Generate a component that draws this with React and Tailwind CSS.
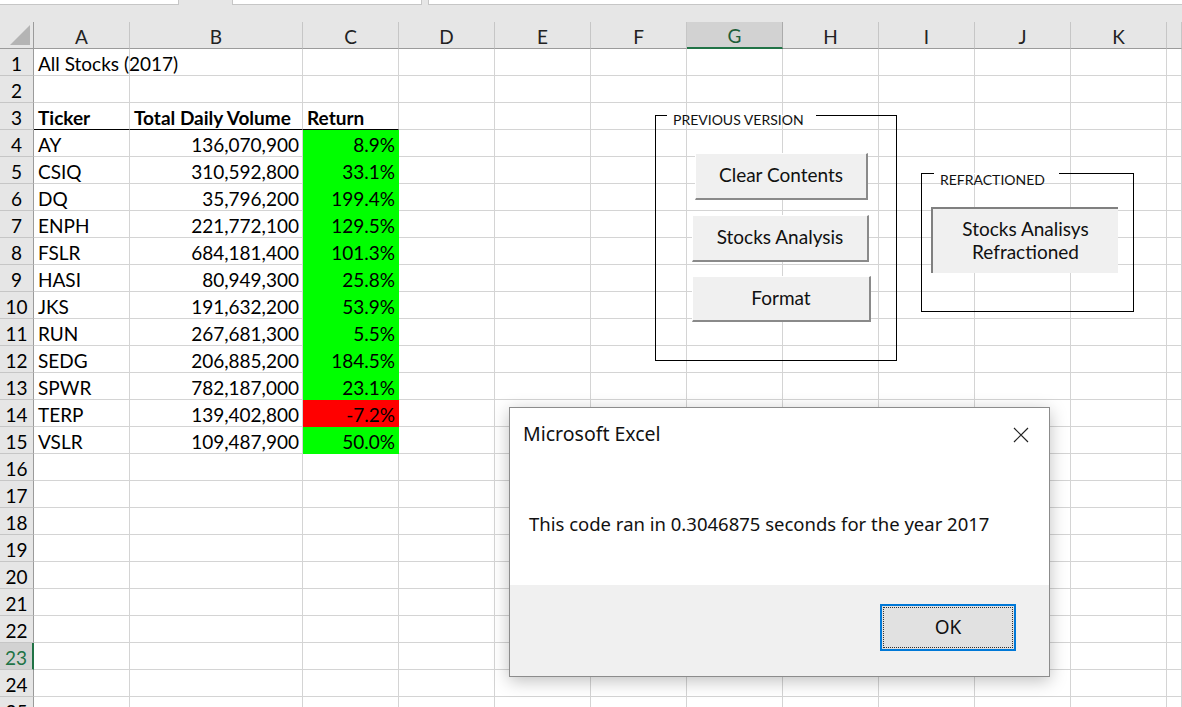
import React from "react";

const COLS = ["A", "B", "C", "D", "E", "F", "G", "H", "I", "J", "K", ""];
const data = {
  1: { A: "All Stocks (2017)" },
  3: { A: "Ticker", B: "Total Daily Volume", C: "Return", bold: true },
  4: ["AY", "136,070,900", "8.9%"],
  5: ["CSIQ", "310,592,800", "33.1%"],
  6: ["DQ", "35,796,200", "199.4%"],
  7: ["ENPH", "221,772,100", "129.5%"],
  8: ["FSLR", "684,181,400", "101.3%"],
  9: ["HASI", "80,949,300", "25.8%"],
  10: ["JKS", "191,632,200", "53.9%"],
  11: ["RUN", "267,681,300", "5.5%"],
  12: ["SEDG", "206,885,200", "184.5%"],
  13: ["SPWR", "782,187,000", "23.1%"],
  14: ["TERP", "139,402,800", "-7.2%"],
  15: ["VSLR", "109,487,900", "50.0%"],
};

const gridCols =
  "grid grid-cols-[34px_96px_173px_96px_96px_96px_96px_96px_96px_96px_96px_96px_15px]";

function Row({ n }) {
  const d = data[n];
  const isData = Array.isArray(d);
  const sel = n === 23;
  return (
    <div className={`${gridCols} h-[27px]`}>
      <div
        className={`flex items-center justify-center border-b border-b-[#c6c6c6] border-r ${
          sel
            ? "bg-[#d2d2d2] text-[#217346] border-r-2 border-r-[#217346]"
            : "bg-[#e6e6e6] text-black border-r-[#9b9b9b]"
        } text-[19px] leading-none pt-[3px]`}
      >
        {n}
      </div>
      {COLS.map((c, i) => {
        let text = "";
        let cls = "border-r border-b border-[#d4d4d4] bg-white";
        let align = "justify-start pl-[4px]";
        if (isData) {
          if (c === "A") text = d[0];
          if (c === "B") {
            text = d[1];
            align = "justify-end pr-[3px]";
          }
          if (c === "C") {
            text = d[2];
            align = "justify-end pr-[3px]";
            cls =
              n === 14
                ? "border-r border-b border-[#ff0000] bg-[#ff0000]"
                : "border-r border-b border-[#00ff00] bg-[#00ff00]";
          }
        } else if (d) {
          text = d[c] || "";
          if (d.bold && ["A", "B", "C"].includes(c)) {
            cls = "border-r border-b border-[#d4d4d4] border-b-black bg-white";
          }
        }
        return (
          <div
            key={i}
            className={`${cls} flex items-center ${align} overflow-visible whitespace-nowrap text-[19px] leading-none pt-[3px] ${
              d && d.bold ? "font-bold" : ""
            }`}
          >
            <span className="relative z-10">{text}</span>
          </div>
        );
      })}
    </div>
  );
}

function GroupBox({ className, label, labelClass, textClass }) {
  return (
    <div className={`absolute border border-black ${className}`}>
      <div
        className={`absolute -top-[1px] border-t border-white pl-[6px] text-[14px] leading-[16px] text-[#111] ${labelClass}`}
      >
        <span className={`relative block ${textClass}`}>{label}</span>
      </div>
    </div>
  );
}

function XlButton({ className, children }) {
  return (
    <div
      className={`absolute flex items-center justify-center text-center bg-[#f0f0f0] text-[19px] leading-[23px] text-[#111] ${className}`}
    >
      {children}
    </div>
  );
}

export default function App() {
  const rows = Array.from({ length: 25 }, (_, i) => i + 1);
  return (
    <div
      className="relative w-[1182px] h-[707px] overflow-hidden bg-white"
      style={{ fontFamily: "Lato, 'Noto Sans', sans-serif" }}
    >
      {/* top strip */}
      <div className="h-[22px] bg-[#e6e6e6] flex items-start">
        <div className="w-[179px] h-[5px] bg-white border-b border-r border-[#c6c6c6]" />
        <div className="w-[53px]" />
        <div className="w-[190px] h-[5px] bg-white border-b border-x border-[#c6c6c6]" />
        <div className="w-[6px]" />
        <div className="flex-1 h-[5px] bg-white border-b border-l border-[#c6c6c6]" />
      </div>
      {/* column headers */}
      <div className={`${gridCols} h-[27px] bg-[#e6e6e6]`}>
        <div className="relative border-r border-b border-[#9b9b9b]">
          <svg className="absolute right-[3px] bottom-[3px]" width="20" height="20" viewBox="0 0 20 20">
            <polygon points="20,0 20,20 0,20" fill="#b4b4b4" />
          </svg>
        </div>
        {COLS.map((c, i) => (
          <div
            key={i}
            className={`flex items-center justify-center text-[19px] leading-none ${
              c === "G"
                ? "bg-[#d2d2d2] text-[#1e5e3a] border-b-2 border-b-[#217346] border-r border-r-[#ababab]"
                : "text-[#222] border-b border-b-[#9b9b9b] border-r border-r-[#c6c6c6]"
            }`}
          >
            <span className="mt-[2px]">{c}</span>
          </div>
        ))}
      </div>
      {rows.map((n) => (
        <Row key={n} n={n} />
      ))}

      {/* PREVIOUS VERSION group */}
      <GroupBox
        className="left-[655px] top-[115px] w-[242px] h-[246px]"
        label="PREVIOUS VERSION"
        labelClass="left-[11px] pr-[12px]"
        textClass="-top-[4px]"
      />
      <XlButton className="left-[695px] top-[153px] w-[173px] h-[47px] pb-[3px] border-t border-l border-t-white border-l-white border-b-2 border-r-2 border-b-[#8a8a8a] border-r-[#8a8a8a]">
        Clear Contents
      </XlButton>
      <XlButton className="left-[692px] top-[215px] w-[177px] h-[47px] pb-[3px] border-t border-l border-t-white border-l-white border-b-2 border-r-2 border-b-[#8a8a8a] border-r-[#8a8a8a]">
        Stocks Analysis
      </XlButton>
      <XlButton className="left-[692px] top-[276px] w-[179px] h-[46px] pb-[3px] border-t border-l border-t-white border-l-white border-b-2 border-r-2 border-b-[#8a8a8a] border-r-[#8a8a8a]">
        Format
      </XlButton>

      {/* REFRACTIONED group */}
      <GroupBox
        className="left-[921px] top-[173px] w-[213px] h-[139px]"
        label="REFRACTIONED"
        labelClass="left-[12px] pr-[14px]"
        textClass="-top-[2px]"
      />
      <XlButton className="left-[931px] top-[207px] w-[187px] h-[66px] pb-[2px] border-t-2 border-l-2 border-[#808080]">
        <span>
          Stocks Analisys
          <br />
          Refractioned
        </span>
      </XlButton>

      {/* Dialog */}
      <div
        className="absolute left-[509px] top-[407px] w-[541px] h-[270px] bg-white border border-[#8c8c8c] shadow-[0_4px_16px_rgba(0,0,0,0.25)] flex flex-col"
        style={{ fontFamily: "'Noto Sans', 'Open Sans', sans-serif" }}
      >
        <div className="h-[177px] relative">
          <div className="absolute left-[13px] top-[13px] text-[19.5px] leading-[26px] text-[#111]">
            Microsoft Excel
          </div>
          <svg
            className="absolute left-[503px] top-[19px]"
            width="16"
            height="16"
            viewBox="0 0 16 16"
          >
            <path d="M1 1 L15 15 M15 1 L1 15" stroke="#222" strokeWidth="1.2" fill="none" />
          </svg>
          <div className="absolute left-[19px] top-[103px] text-[18.5px] leading-[26px] text-[#111] whitespace-nowrap">
            This code ran in 0.3046875 seconds for the year 2017
          </div>
        </div>
        <div className="flex-1 bg-[#f0f0f0] relative">
          <div className="absolute left-[370px] top-[19px] w-[136px] h-[47px] border-2 border-[#0078d7] bg-[#e1e1e1] p-[1px]">
            <div className="w-full h-full border border-dotted border-[#333] flex items-center justify-center text-[19px] text-[#111]">
              OK
            </div>
          </div>
        </div>
      </div>
    </div>
  );
}
